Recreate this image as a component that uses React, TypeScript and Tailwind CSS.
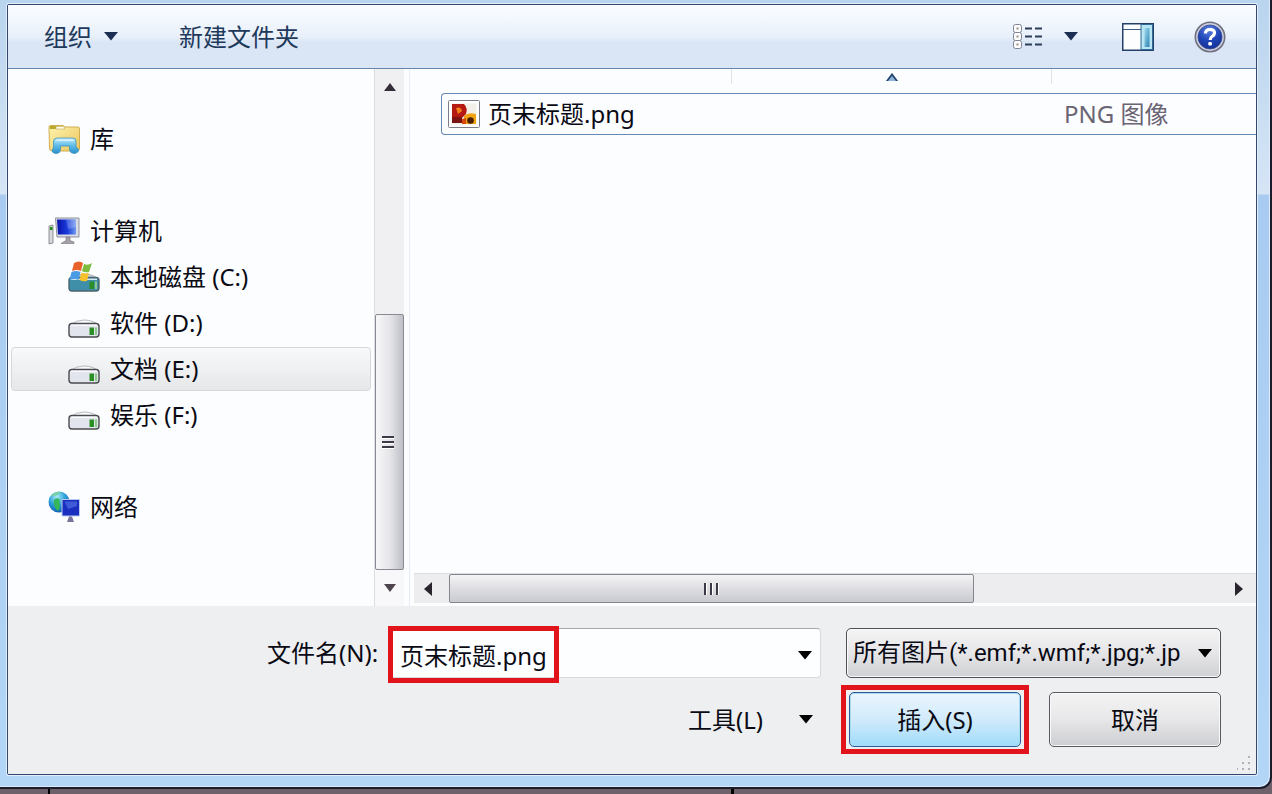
import React from "react";

const FONT = "font-['Noto_Sans','Noto_Sans_CJK_SC',sans-serif]";

function Caret({ className = "fill-black" }: { className?: string }) {
  return (
    <svg viewBox="0 0 14 9" className={`h-[9px] w-[14px] shrink-0 ${className}`} aria-hidden="true">
      <path d="M0 0H14L7 8.5Z" />
    </svg>
  );
}

function LibraryIcon() {
  return (
    <svg viewBox="0 0 32 30" className="h-[30px] w-8 shrink-0" aria-hidden="true">
      <defs>
        <linearGradient id="lib-f" x1="0" y1="0" x2="1" y2="1">
          <stop offset="0" stopColor="#fdf3b0" />
          <stop offset="1" stopColor="#ecc65c" />
        </linearGradient>
        <linearGradient id="lib-b" x1="0" y1="0" x2="0" y2="1">
          <stop offset="0" stopColor="#c4ecfb" />
          <stop offset=".5" stopColor="#5cbbe8" />
          <stop offset="1" stopColor="#2a8fcb" />
        </linearGradient>
      </defs>
      <path d="M1 3Q1 1.500 2.500 1.500H15L17 3H30Q31.500 3 31.500 5V25Q31 27 29 27H4Q1.500 27 1.500 24Z" fill="url(#lib-f)" stroke="#cfae50" />
      <path d="M2 2H10V5H2Z" fill="#b9a92a" />
      <path d="M8 2.500H15.500L17 5H8Z" fill="#fffdf0" stroke="#c9b468" strokeWidth=".7" />
      <path d="M9 14H25Q28 14 28 17V23Q31 24.500 30.500 27Q29 29.500 26 29.500Q22 29 21.500 26V22H12.500V26Q12 29.500 8 29.500Q4 29 4 26.500Q5 25 5.500 23V17Q6 14 9 14Z" fill="url(#lib-b)" stroke="#3d94bd" strokeWidth=".8" />
      <path d="M8 17Q8 15.500 10 15.500H24Q26 15.500 26 17Z" fill="#e6f8ff" opacity=".8" />
    </svg>
  );
}

function ComputerIcon() {
  return (
    <svg viewBox="0 0 32 28" className="h-7 w-8 shrink-0" aria-hidden="true">
      <defs>
        <linearGradient id="pc-s" x1="0" y1="0" x2="1" y2="0">
          <stop offset="0" stopColor="#0912a8" />
          <stop offset=".55" stopColor="#1a3bdc" />
          <stop offset="1" stopColor="#6f9af0" />
        </linearGradient>
      </defs>
      <path d="M1 9L5 8V26L1 27Z" fill="#d5d8dc" stroke="#77797f" strokeWidth=".8" />
      <path d="M2 10H4.500V13H2Z" fill="#25891b" />
      <path d="M7.500 1H31V20H9Z" fill="#d9dce6" stroke="#8c909c" />
      <path d="M9 2.500H28V17.500H10Z" fill="url(#pc-s)" />
      <path d="M18 3H28V10L20 12Z" fill="#fff" opacity=".22" />
      <path d="M18 20H22V23.500L26 25V26.500H13L18 23.500Z" fill="#a4a1aa" stroke="#77747e" strokeWidth=".6" />
    </svg>
  );
}

function DriveBody({ blue = false }: { blue?: boolean }) {
  return (
    <g>
      <path d="M2 18Q8 13 16 13Q25 13 30 18Z" fill={blue ? "#c7d3da" : "#fafafb"} stroke="#a4a9ae" strokeWidth=".8" />
      <rect x="1" y="16.500" width="30" height="13.500" rx="3" fill={blue ? "#3f8fa9" : "#e3e5ee"} stroke={blue ? "#4b6470" : "#4b4a50"} strokeWidth="1.400" />
      <path d="M3 18.300H29" stroke="#fff" strokeWidth="1.400" opacity=".8" />
      <rect x="21.500" y="20.500" width="4.500" height="7.500" fill="#2c8f25" />
      <rect x="27" y="20.500" width="2" height="7.500" fill="#8dc98a" />
    </g>
  );
}

function DriveIcon() {
  return (
    <svg viewBox="0 10 32 22" className="mt-[9px] h-[22px] w-8 shrink-0" aria-hidden="true">
      <DriveBody />
    </svg>
  );
}

function SystemDriveIcon() {
  return (
    <svg viewBox="0 0 32 32" className="h-8 w-8 shrink-0" aria-hidden="true">
      <DriveBody blue />
      <path d="M6 2Q11-1 15 2L13 10Q9 8 4 10Z" fill="#e9622c" />
      <path d="M16 3Q20 5 24 2L21 11Q17 12 14 10Z" fill="#7cbb3c" />
      <path d="M3.500 11Q8 9 12.500 11L10.500 19Q7 17 1.500 19Z" fill="#4a9be4" />
      <path d="M13.500 11.500Q17 13 21 12L19 20Q15 21 11.500 19Z" fill="#f6c12d" />
    </svg>
  );
}

function NetworkIcon() {
  return (
    <svg viewBox="0 0 32 32" className="h-8 w-8 shrink-0" aria-hidden="true">
      <defs>
        <radialGradient id="net-g" cx=".4" cy=".25" r=".8">
          <stop offset="0" stopColor="#a7ebf7" />
          <stop offset=".5" stopColor="#2b9fd8" />
          <stop offset="1" stopColor="#0b57ae" />
        </radialGradient>
      </defs>
      <circle cx="11" cy="11" r="10.500" fill="url(#net-g)" />
      <path d="M7 8Q10 6 12 9Q11 12 12 14Q12 18 10 20Q6 17 6 13Q5 10 7 8Z" fill="#35b659" />
      <path d="M3 5Q8 0 13 1Q10 4 6 5Z" fill="#7bd0a0" />
      <path d="M14 8.500H31.500V25H14Z" fill="#1a2fc0" stroke="#b8c9ef" />
      <path d="M16.500 10.500H29V15L20 18Z" fill="#6688f0" opacity=".5" />
      <path d="M21 25.500H24L26 31H19Z" fill="#77759a" />
    </svg>
  );
}

function PictureFileIcon() {
  return (
    <svg viewBox="0 0 32 28" className="h-7 w-8 shrink-0" aria-hidden="true">
      <rect x=".5" y=".5" width="31" height="27" rx="1" fill="#fdfdfd" stroke="#7c7c88" />
      <rect x="3.500" y="3.500" width="25" height="21" fill="#f3efe9" />
      <path d="M4 4H16Q20 8 18 14L14 18V23H4Z" fill="#b41a12" />
      <path d="M8 8Q13 6 14 11L10 14Z" fill="#f0801c" />
      <path d="M4 17H14V23H4Z" fill="#7b1411" />
      <path d="M16 16Q20 12 28 14V24H16Z" fill="#f0a412" />
      <circle cx="22.500" cy="20.500" r="3.300" fill="#4a1e05" />
      <path d="M14 19L18 18V24H14Z" fill="#d9480f" />
    </svg>
  );
}

function ViewIcon() {
  return (
    <svg viewBox="0 0 32 26" className="h-[26px] w-8" aria-hidden="true">
      {[0, 8, 16].map((y) => (
        <g key={y}>
          <rect x="1.500" y={y + 0.5} width="8" height="8" rx="2" fill="#fdfdfe" stroke="#7f8594" />
          <rect x="4.500" y={y + 3.5} width="2" height="2" fill="#9a8f8c" />
          <path d={`M13 ${y + 4.5}H20M23 ${y + 4.5}H30`} stroke="#2c3d58" strokeWidth="1.800" />
        </g>
      ))}
    </svg>
  );
}

function PreviewPaneIcon() {
  return (
    <svg viewBox="0 0 32 28" className="h-7 w-8" aria-hidden="true">
      <defs>
        <linearGradient id="pane-g" x1="0" y1="0" x2="1" y2="1">
          <stop offset="0" stopColor="#9fdcee" />
          <stop offset="1" stopColor="#2f83b3" />
        </linearGradient>
      </defs>
      <rect x=".75" y=".75" width="30.500" height="26.500" fill="#fdfeff" stroke="#27406b" strokeWidth="1.500" />
      <path d="M1 6.500H19" stroke="#3d5a86" />
      <rect x="19" y="1.500" width="11.500" height="25" fill="#b9e5f2" stroke="#2f6d98" />
      <rect x="22.500" y="5" width="5" height="19" fill="url(#pane-g)" />
    </svg>
  );
}

function HelpIcon() {
  return (
    <svg viewBox="0 0 32 32" className="h-8 w-8" aria-hidden="true">
      <defs>
        <radialGradient id="help-g" cx=".45" cy=".2" r=".9">
          <stop offset="0" stopColor="#5d83e0" />
          <stop offset=".5" stopColor="#1f45b8" />
          <stop offset="1" stopColor="#122c8d" />
        </radialGradient>
      </defs>
      <circle cx="16" cy="16" r="14.700" fill="#c9cede" stroke="#6f7080" strokeWidth="1.600" />
      <circle cx="16" cy="16" r="12" fill="url(#help-g)" stroke="#3a4a8c" strokeWidth=".8" />
      <path d="M11.500 12.500Q11.500 8.500 16 8.500Q20.500 8.500 20.500 12Q20.500 14 18 15.500Q16.200 16.600 16.200 19" fill="none" stroke="#fff" strokeWidth="3.200" />
      <rect x="14.300" y="21" width="3.600" height="3.600" rx="1" fill="#fff" />
    </svg>
  );
}

type NavItem = { label: string; icon: React.ReactNode; child?: boolean; selected?: boolean };

const groups: NavItem[][] = [
  [{ label: "库", icon: <LibraryIcon /> }],
  [
    { label: "计算机", icon: <ComputerIcon /> },
    { label: "本地磁盘 (C:)", icon: <SystemDriveIcon />, child: true },
    { label: "软件 (D:)", icon: <DriveIcon />, child: true },
    { label: "文档 (E:)", icon: <DriveIcon />, child: true, selected: true },
    { label: "娱乐 (F:)", icon: <DriveIcon />, child: true },
  ],
  [{ label: "网络", icon: <NetworkIcon /> }],
];

function Toolbar() {
  return (
    <header className="flex h-16 shrink-0 items-center border-b border-[#6488ac] bg-linear-to-b from-[#fbfdff] from-0% via-[#e8f0fa] via-50% to-[#dae6f5] to-60% pr-[30px] pl-9 text-[#1e395b]">
      <button type="button" className="flex items-center gap-3">
        组织
        <Caret className="fill-[#1c2f52]" />
      </button>
      <button type="button" className="ml-[61px]">新建文件夹</button>
      <div className="ml-auto flex items-center">
        <button type="button" aria-label="更改视图" className="flex items-center gap-5">
          <ViewIcon />
          <Caret className="fill-[#1c2f52]" />
        </button>
        <button type="button" aria-label="显示预览窗格" className="ml-11">
          <PreviewPaneIcon />
        </button>
        <button type="button" aria-label="获取帮助" className="ml-10">
          <HelpIcon />
        </button>
      </div>
    </header>
  );
}

function Navigation() {
  return (
    <nav className="flex w-[366px] shrink-0 flex-col gap-[46px] bg-[#fcfdff] pt-[47px] pr-[3px] pl-[3px]">
      {groups.map((items, i) => (
        <ul key={i}>
          {items.map((item) => (
            <li key={item.label} className="py-px">
              <button
                type="button"
                className={`flex h-11 w-full items-center gap-[10px] rounded-sm border text-left text-[#0a0a14] ${
                  item.child ? "pl-14" : "pl-9"
                } ${
                  item.selected
                    ? "border-[#d5d7da] bg-linear-to-b from-[#f8f9fa] to-[#e6e7e9]"
                    : "border-transparent"
                }`}
              >
                {item.icon}
                {item.label}
              </button>
            </li>
          ))}
        </ul>
      ))}
    </nav>
  );
}

function VerticalScrollbar() {
  return (
    <div className="flex w-[30px] shrink-0 flex-col border-l border-[#dcdee2] bg-[#f0f0f2]">
      <button type="button" aria-label="向上滚动" className="flex h-9 shrink-0 items-center justify-center">
        <svg viewBox="0 0 12 8" className="h-2 w-3" aria-hidden="true">
          <path d="M0 8L6 0L12 8Z" fill="#352c3a" />
        </svg>
      </button>
      <div className="flex-[209]" />
      <div className="flex flex-[255] flex-col items-center justify-center gap-[3px] rounded-xs border border-[#8b8a94] bg-linear-to-r from-[#f7f7f8] via-[#e6e6ea] to-[#bfc0c8] pr-1">
        <span className="h-[2px] w-3 bg-[#3d3946] shadow-[0_1px_0_#fff]" />
        <span className="h-[2px] w-3 bg-[#3d3946] shadow-[0_1px_0_#fff]" />
        <span className="h-[2px] w-3 bg-[#3d3946] shadow-[0_1px_0_#fff]" />
      </div>
      <button type="button" aria-label="向下滚动" className="flex h-9 shrink-0 items-center justify-center bg-[#f8f8fa]">
        <svg viewBox="0 0 12 8" className="h-2 w-3" aria-hidden="true">
          <path d="M0 0H12L6 8Z" fill="#4d444e" />
        </svg>
      </button>
    </div>
  );
}

function HorizontalScrollbar() {
  return (
    <div className="mb-[3px] ml-1 flex h-[30px] shrink-0 border-t border-[#dcdde1] bg-[#ededf0]">
      <button type="button" aria-label="向左滚动" className="flex w-[35px] shrink-0 items-center justify-center pr-2">
        <svg viewBox="0 0 8 14" className="h-[14px] w-2" aria-hidden="true">
          <path d="M8 0V14L0 7Z" fill="#29242e" />
        </svg>
      </button>
      <div className="flex flex-[524] items-center justify-center gap-1 rounded-xs border border-[#85858e] bg-linear-to-b from-[#f4f4f6] via-[#dedee2] via-50% to-[#c9cad0]">
        <span className="h-3 w-[2px] bg-[#3d3946] shadow-[1px_0_0_#fff]" />
        <span className="h-3 w-[2px] bg-[#3d3946] shadow-[1px_0_0_#fff]" />
        <span className="h-3 w-[2px] bg-[#3d3946] shadow-[1px_0_0_#fff]" />
      </div>
      <div className="flex-[248]" />
      <button type="button" aria-label="向右滚动" className="flex w-[35px] shrink-0 items-center justify-center">
        <svg viewBox="0 0 8 14" className="h-[14px] w-2" aria-hidden="true">
          <path d="M0 0V14L8 7Z" fill="#29242e" />
        </svg>
      </button>
    </div>
  );
}

function FileTable() {
  return (
    <div className="flex-1 pl-[31px]">
      <table className="w-full table-fixed border-separate border-spacing-0">
        <thead>
          <tr className="h-6 align-top">
            <th aria-label="名称" className="w-[290px] p-0">
              <div className="h-[15px]" />
            </th>
            <th aria-label="日期" aria-sort="ascending" className="w-80 p-0">
              <div className="flex h-[15px] items-center justify-center border-l border-[#dfe4ea]">
                <svg viewBox="0 0 12 8" className="h-2 w-3" aria-hidden="true">
                  <path d="M0 8L6 0L12 8Z" fill="#8fb4dc" />
                  <path d="M0 8L6 0L12 8H10L6 3L2 8Z" fill="#27456e" />
                </svg>
              </div>
            </th>
            <th aria-label="类型" className="p-0">
              <div className="h-[15px] border-l border-[#dfe4ea]" />
            </th>
          </tr>
        </thead>
        <tbody>
          <tr className="h-[42px]">
            <td className="rounded-l-sm border-y border-l border-[#6688b4] p-0 pl-[6px] text-[#0a0a14]">
              <div className="flex items-center gap-2">
                <PictureFileIcon />
                页末标题.png
              </div>
            </td>
            <td className="border-y border-[#6688b4] p-0" />
            <td className="border-y border-[#6688b4] p-0 pl-[13px] text-[#6a6473]">PNG 图像</td>
          </tr>
        </tbody>
      </table>
    </div>
  );
}

function Footer() {
  return (
    <footer className="relative shrink-0 bg-[#eeeff1] pt-[22px] pr-[35px] pb-[27px] pl-[259px] text-[#0a0a14]">
      <div className="flex h-[50px] items-center">
        <label htmlFor="file-name" className="shrink-0">文件名(N):</label>
        <div className="relative ml-[11px] flex h-full flex-1 items-center rounded-sm border border-[#d8dadf] border-t-[#a6a9b0] bg-[#fdfeff] pr-2">
          <input id="file-name" type="text" defaultValue="页末标题.png" className="h-full min-w-0 flex-1 bg-transparent pt-[2px] pl-[10px] outline-none" />
          <button type="button" aria-label="以前的文件名" className="pt-1">
            <Caret />
          </button>
          <span className="pointer-events-none absolute -top-[3px] -left-[2px] h-[57px] w-[171px] border-[5px] border-[#e1141c]" />
        </div>
        <div className="relative ml-[25px] flex h-full w-[375px] shrink-0 items-center">
          <select
            aria-label="文件类型"
            className="h-full w-full appearance-none rounded-[5px] border border-[#4f4f57] bg-linear-to-b from-[#f4f4f5] via-[#e6e6e8] via-50% to-[#cfd0d3] pr-10 pl-[6px] font-['Roboto','Noto_Sans_CJK_SC',sans-serif] shadow-[inset_0_0_0_1px_#fafafb] outline-none"
          >
            <option>所有图片(*.emf;*.wmf;*.jpg;*.jpeg;*.jfif;*.jpe;*.png)</option>
          </select>
          <Caret className="pointer-events-none absolute right-[9px] fill-black" />
        </div>
      </div>
      <div className="mt-[14px] flex h-[55px] items-center justify-end">
        <button type="button" className="flex items-center gap-9">
          工具(L)
          <Caret />
        </button>
        <div className="relative ml-9 h-full w-[172px]">
          <button type="button" className="h-full w-full rounded-[5px] border border-[#2f5a94] bg-linear-to-b from-[#e9f5fd] from-0% via-[#d3ebfb] via-48% to-[#9fdcfa] to-100% shadow-[inset_0_0_0_1px_#a9dcf3]">
            插入(S)
          </button>
          <span className="pointer-events-none absolute -inset-x-2 -inset-y-[7px] border-[5px] border-[#e1141c]" />
        </div>
        <button type="button" className="ml-7 h-full w-[172px] rounded-[5px] border border-[#5a5a62] bg-linear-to-b from-[#f3f3f4] from-0% via-[#e8e8ea] via-48% to-[#cdced1] to-100% shadow-[inset_0_0_0_1px_#fafafb]">
          取消
        </button>
      </div>
      <svg viewBox="0 0 14 14" className="absolute right-[5px] bottom-1 h-[14px] w-[14px]" fill="#b3b2bc" aria-hidden="true">
        <path d="M11 0h2v2h-2zM11 6h2v2h-2zM11 12h2v2h-2zM5 6h2v2H5zM5 12h2v2H5zM0 12h1v2H0z" />
      </svg>
    </footer>
  );
}

export default function App() {
  return (
    <div className={`flex min-h-screen flex-col bg-[#6e6169] text-2xl leading-8 ${FONT}`}>
      <div className="flex flex-1 flex-col rounded-br-xl border-r-2 border-b-2 border-[#1b1c2c] bg-[linear-gradient(to_bottom,#b9d4ee_0px,#d6e5f6_194px,#a9cbf1_195px,#b3d5f6_100%)] pt-1 pr-[13px] pb-3 pl-[7px] shadow-[inset_-1px_-1px_0_#dcecfb]">
        <div className="flex flex-1 flex-col overflow-hidden rounded-xs border border-[#34466f] shadow-[0_0_0_1px_#e2f0fc]">
          <Toolbar />
          <main className="flex flex-1 bg-[#fcfdff]">
            <Navigation />
            <VerticalScrollbar />
            <section className="ml-[5px] flex min-w-0 flex-1 flex-col border-l border-[#e6edf6]">
              <FileTable />
              <HorizontalScrollbar />
            </section>
          </main>
          <Footer />
        </div>
      </div>
      <div className="flex h-[5px] shrink-0">
        <div className="w-[50px] border-r-2 border-black" />
        <div className="w-[684px] border-r-[3px] border-black" />
      </div>
    </div>
  );
}
